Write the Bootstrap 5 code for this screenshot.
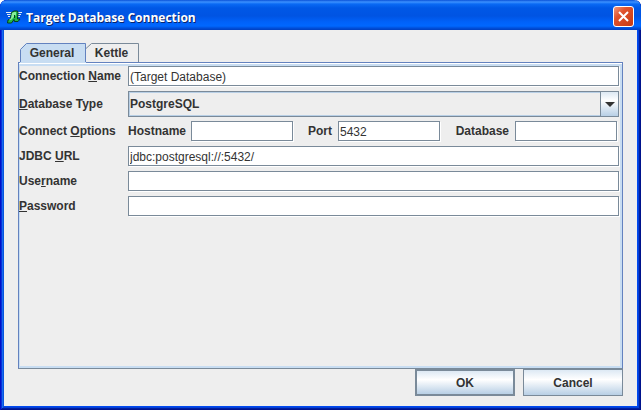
<!DOCTYPE html>
<html lang="en">
<head>
<meta charset="utf-8">
<meta name="viewport" content="width=device-width, initial-scale=1">
<title>Target Database Connection</title>
<link href="https://cdn.jsdelivr.net/npm/bootstrap@5.3.0/dist/css/bootstrap.min.css" rel="stylesheet">
<style>
body{font-family:"Liberation Sans",Arial,sans-serif;font-size:12px;line-height:16px;color:#333;background:#fff}
.window{background:#eee;padding:0 4px 4px;border-radius:7px 7px 0 0;box-shadow:inset 1px 0 #0010c8,inset -1px -1px #00138c,inset 2px 0 #0831d9,inset -2px -2px #001ea0,inset 3px 0 #166aee,inset -3px -3px #0441d8,inset 4px 0 #0855dd,inset -4px -4px #0048f1;overflow:hidden}
.titlebar{height:30px;margin:0 -4px;padding:3px 7px 0 6px;color:#fff;background:linear-gradient(#0a52d8 0,#3c91ff 2px,#0a6af4 4px,#0058e6 8px,#0054e3 16px,#0062fa 22px,#0068ff 26px,#0050dc 28px,#003fc0 30px)}
.titlebar h1{font-family:"Open Sans","Noto Sans",sans-serif;font-size:12px;line-height:18px;padding-top:2px;text-shadow:1px 1px #0a246a}
.btn-x{width:21px;height:21px;border:1px solid #fff;border-radius:3px;background:linear-gradient(135deg,#f0987c,#e0512c 35%,#c73a12)}
.content-area{padding:13px 14px 10px}
.tabs{padding-left:2px;height:19px}
.tab-btn{border:0;background:none;color:#333;font-weight:700;position:relative;line-height:18px;height:19px}
.tab-btn span{position:relative}
.tab-btn svg{position:absolute;left:0;top:0;width:100%;height:100%}
.tab-one{width:66px;height:20px;z-index:1;padding:0 2px 0 0}
.tab-two{width:53px;padding:0 2px 0 0}
.pane{border:1px solid #6382bf;border-bottom-color:#7a8a99;box-shadow:inset 0 1px #fff,inset 1px 0 #c8ddf2,inset -2px 0 #c8ddf2,inset 0 -2px #c8ddf2,inset 0 3px #c8ddf2;padding:3px 3px 0 0}
.line{display:grid;grid-template-columns:109px 1fr;align-items:center;margin-bottom:5px}
.line-combo{margin-bottom:4px}
.line label{font-weight:700;white-space:nowrap}
.line input{height:20px;width:100%;min-width:0;border:1px solid #7a8a99;background:#fff;box-shadow:1px 1px #fff;padding:2px 1px 0;color:#333;outline:0;border-radius:0}
.combo{position:relative;height:26px}
.combo select{appearance:none;width:100%;height:26px;border:1px solid #7a8a99;border-radius:0;background:#eee;box-shadow:inset 0 0 0 1px #b8cfe5;font-weight:700;color:#333;padding:0 24px 0 1px;outline:0}
.combo-arrow{position:absolute;right:0;top:0;width:19px;height:26px;border:1px solid #7a8a99;background:linear-gradient(#dce8f3,#fff 35%,#b8cfe5);pointer-events:none}
.triple{display:grid;grid-template-columns:63px 1fr 45px 1fr 75px 1fr;align-items:center;padding-right:2px}
.triple .later{text-align:right;padding-right:6px}
.push{width:100px;height:27px;border:1px solid #7a8a99;background:linear-gradient(#dde9f4,#fff 38%,#b8cfe5);font-weight:700;color:#333;padding:0}
.push-default{border-width:2px}
</style>
<script src="https://cdn.jsdelivr.net/npm/bootstrap@5.3.0/dist/js/bootstrap.bundle.min.js"></script>
</head>
<body>
<main class="window min-vh-100 d-flex flex-column">
  <header class="titlebar d-flex align-items-center">
    <svg width="16" height="16" viewBox="0 0 16 16" class="me-1 flex-shrink-0" aria-hidden="true">
      <path d="M0 3.500h6M11 3.500h5M1 5.500h5M12 5.500h3M2 7.500h2M12 7.500h2" stroke="#e4ecf4"/>
      <path d="M5.500 3.500L8 2h3.500l.5 2-.5 6H14l-2 2.500H8.500l-.5-2L5.500 14h-4L2 11l2.500-1z" fill="#22b848" stroke="#06401a"/>
      <path d="M6 4l2-1h2v3L5 11H3l2-2z" fill="#86f09a"/>
      <path d="M8.500 6v3" stroke="#06401a"/>
    </svg>
    <h1 class="m-0 fw-bold flex-grow-1">Target Database Connection</h1>
    <button type="button" class="btn-x p-0 d-flex align-items-center justify-content-center" aria-label="Close">
      <svg width="13" height="13" viewBox="0 0 13 13"><path d="M2 2l9 9M11 2l-9 9" stroke="#fff" stroke-width="2"/></svg>
    </button>
  </header>
  <div class="content-area d-flex flex-column flex-grow-1">
    <div class="tabs d-flex" role="tablist">
      <button type="button" role="tab" aria-selected="true" class="tab-btn tab-one"><svg viewBox="0 0 66 20" aria-hidden="true"><path d="M0 20V6L6 0H66V20z" fill="#c8ddf2"/><path d="M0 6V0H6z" fill="#eee"/><path d="M.5 19V6.500L6.500.5H65.500V19" fill="none" stroke="#6382bf"/></svg><span>General</span></button>
      <button type="button" role="tab" aria-selected="false" class="tab-btn tab-two"><svg viewBox="0 0 53 19" aria-hidden="true"><path d="M0 5.500L5.500.5H52.500V19" fill="none" stroke="#7a8a99"/></svg><span>Kettle</span></button>
    </div>
    <form class="pane flex-grow-1">
      <div class="line"><label for="name">Connection <u>N</u>ame</label><input id="name" type="text" value="(Target Database)"></div>
      <div class="line line-combo"><label for="type"><u>D</u>atabase Type</label>
        <div class="combo"><select id="type"><option>PostgreSQL</option></select><span class="combo-arrow d-flex align-items-center justify-content-center"><svg width="10" height="5" viewBox="0 0 10 5"><path d="M0 0h10L5 5z" fill="#333"/></svg></span></div></div>
      <div class="line"><label for="host">Connect <u>O</u>ptions</label>
        <div class="triple"><label for="host">Hostname</label><input id="host" type="text"><label for="port" class="later">Port</label><input id="port" type="text" value="5432"><label for="db" class="later">Database</label><input id="db" type="text"></div></div>
      <div class="line"><label for="url">JDBC <u>U</u>RL</label><input id="url" type="text" value="jdbc:postgresql://:5432/"></div>
      <div class="line"><label for="user">Use<u>r</u>name</label><input id="user" type="text"></div>
      <div class="line"><label for="pass"><u>P</u>assword</label><input id="pass" type="password"></div>
    </form>
    <div class="d-flex justify-content-end gap-2">
      <button type="button" class="push push-default">OK</button>
      <button type="button" class="push">Cancel</button>
    </div>
  </div>
</main>
</body>
</html>
